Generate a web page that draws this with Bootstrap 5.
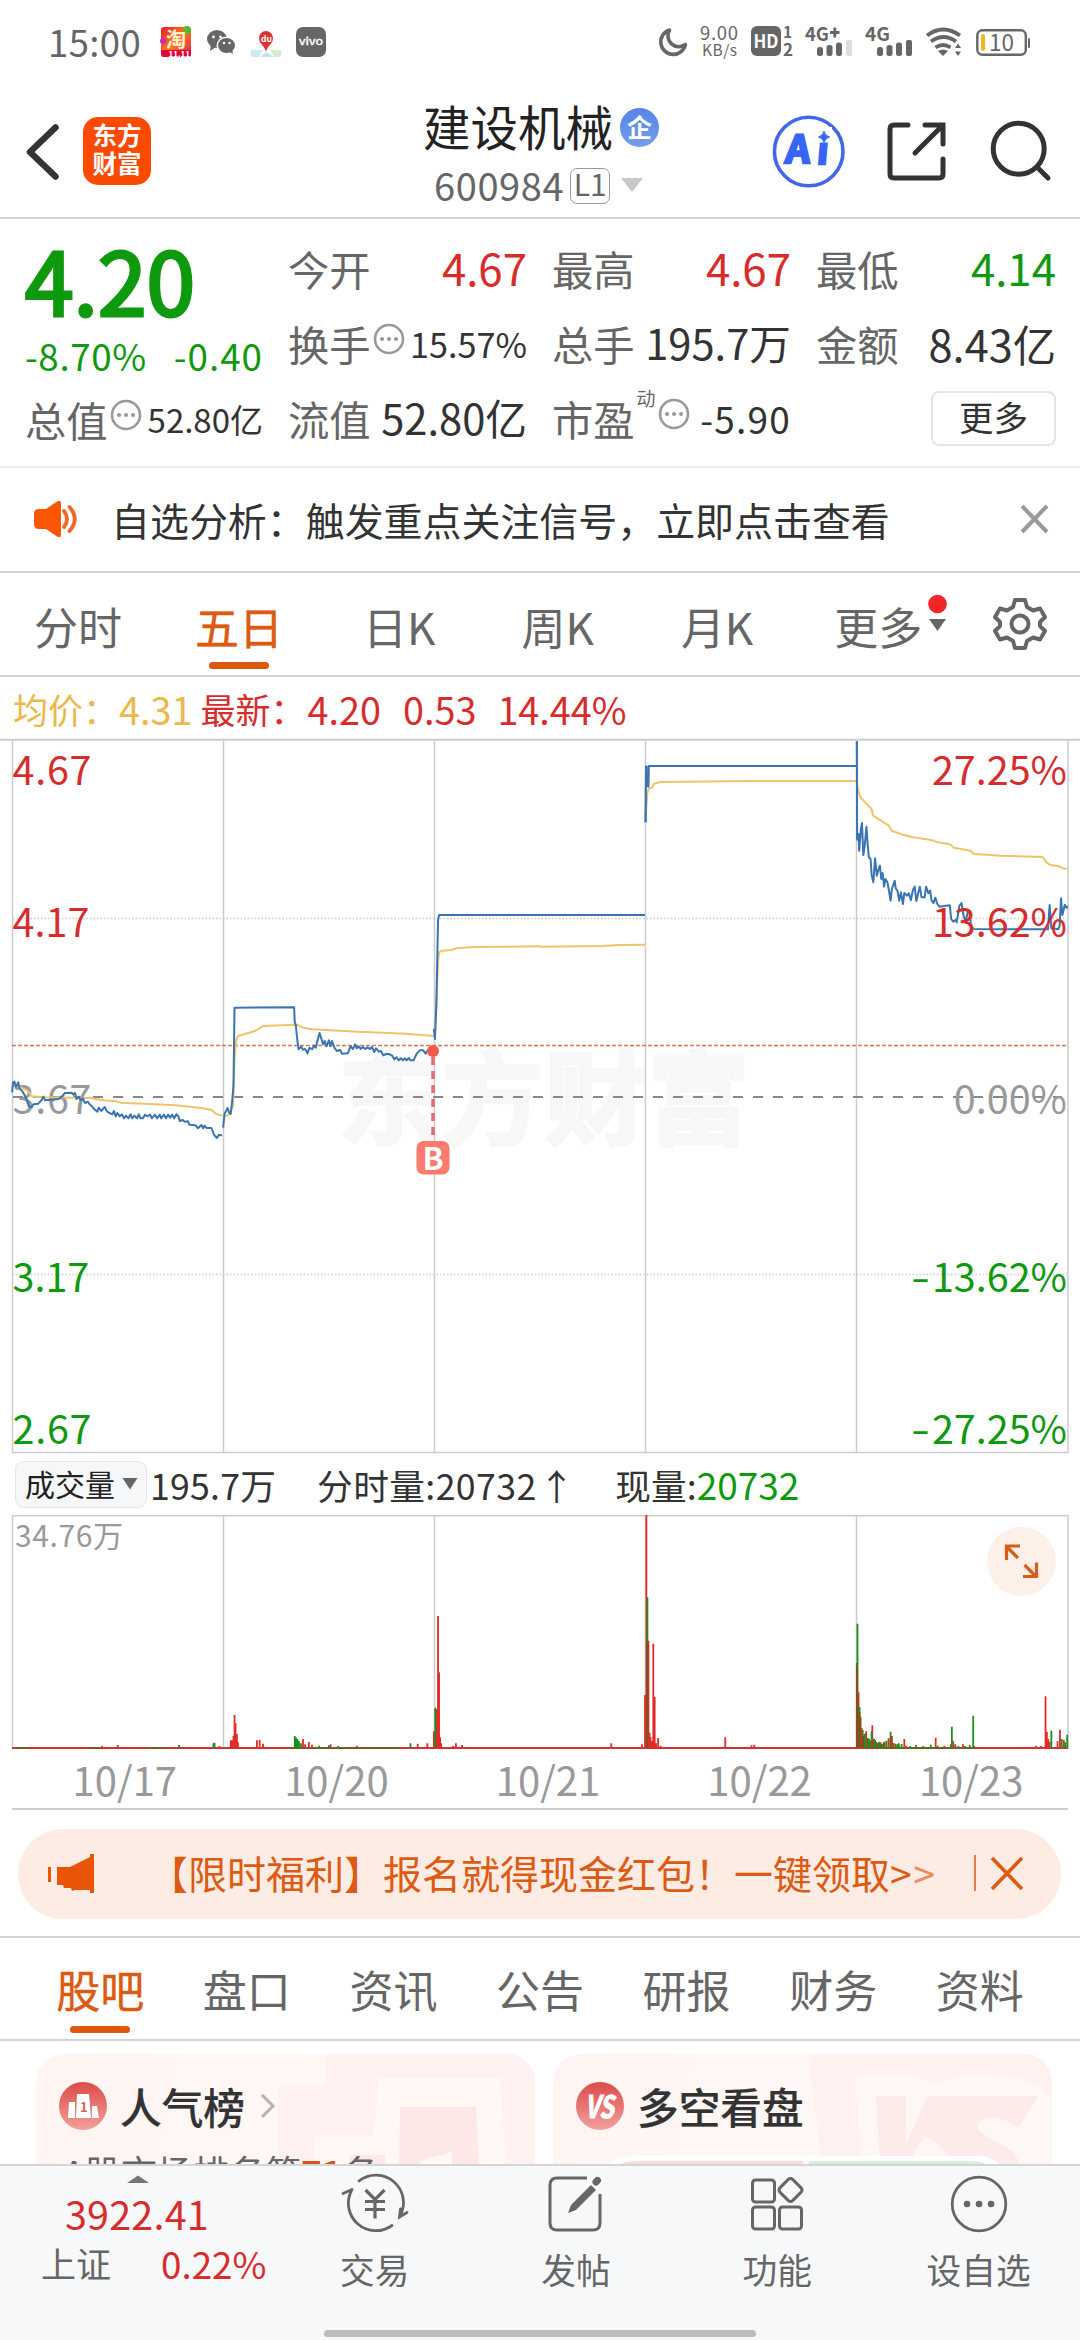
<!DOCTYPE html>
<html lang="zh-CN">
<head>
<meta charset="utf-8">
<meta name="viewport" content="width=device-width, initial-scale=1">
<title>建设机械 600984</title>
<link href="https://cdn.jsdelivr.net/npm/bootstrap@5.3.0/dist/css/bootstrap.min.css" rel="stylesheet">
<style>
:root{--up:#d82c2c;--down:#0f990f;--brand:#dc5a12;--ink:#333;--muted:#666;--line:#d4d4d4}
html,body{width:1080px;height:2340px;overflow:hidden}
body{font-family:"Noto Sans CJK SC",sans-serif;color:var(--ink);background:#fff;line-height:1;font-size:36px}
svg{display:block;flex:none;overflow:visible}
svg text{font-family:"Noto Sans CJK SC",sans-serif}
.up{color:var(--up)}.down{color:var(--down)}.brand{color:var(--brand)}.gray{color:var(--muted)}
.status{height:84px;padding:0 48px 0 48px;color:#666}
.status .clock{font-size:36.5px;line-height:52px;letter-spacing:.4px;margin-right:19px}
.topbar{height:135px;border-bottom:2px solid var(--line)}
.logo{width:68px;height:68px;border-radius:15px;background:#fc4a02;color:#fff;font-weight:700;font-size:24.5px;line-height:28px;padding-top:4px}
.stock-name{font-size:47.5px;line-height:50px;color:#222}
.ent{width:39px;height:39px;border-radius:50%;background:linear-gradient(#5585e8,#739ee9);color:#fff;font-size:25px;line-height:36px;font-weight:700}
.code{font-size:38px;letter-spacing:.6px;line-height:40px}
.lv{width:40px;height:36px;border:1.5px solid #999;border-radius:7px;font-size:30px;line-height:29px}
.quote{height:249px;border-bottom:2px solid #ececec;padding:0 24px 0 25px;display:grid;grid-template-columns:238px 239px 239px 240px;column-gap:25px}
.qcol>div{height:75px}
.qcol{padding-top:12px}
.lbl{font-size:41.3px;color:var(--muted)}
.v44{font-size:43.8px}.v41{font-size:41.7px}.v34{font-size:34.2px}
.price{font-size:87.5px;-webkit-text-stroke:3.2px var(--down);line-height:90px}
.more-btn{width:125px;height:55px;border:2px solid #e4e4e4;border-radius:8px;font-size:34.5px;line-height:42px;padding:0 0 4px;color:#333;background:#fff}
.notice{height:105px;border-bottom:2px solid var(--line);padding:0 31px 0 34px;font-size:38.95px}
.period{height:104px;border-bottom:2px solid var(--line);font-size:44px;color:var(--muted);padding:4px 0 0 34px}
.on{position:relative;color:var(--brand);-webkit-text-stroke:.4px var(--brand)}
.on::after{content:"";position:absolute;left:50%;width:60px;height:7px;border-radius:4px;margin-left:-30px;background:#e0560c;bottom:-12px}
.period .on::after{bottom:-21px}
.legend{height:63px;padding:1px 0 0 13px;font-size:37.8px}
.volhead{height:62px;padding:0 0 0 15px;font-size:35.7px}
.chip{width:132px;height:47px;background:#f6f7f9;border:1.5px solid #e4e6ea;border-radius:9px;font-size:30px;padding:0 8px 3px 9px;color:#222}
.dates{height:60px;margin:0 12px;padding-left:7px;border-bottom:2px solid #ccc;font-size:40px;color:#999}
.dates span{flex:0 0 211.6px}
.promo{height:90px;margin:19px 19px 17px 18px;border-radius:45px;background:#fdece3;color:var(--brand);padding:0 38px 4px 30px;font-size:39px}
.sections{height:105px;border-top:2px solid var(--line);border-bottom:2px solid var(--line);font-size:44px;color:var(--muted);padding:0 27px 0 27px}
.feed{height:123px;padding:13px 28px 0 36px;overflow:hidden;gap:18px}
.tile{width:499px;height:220px;border-radius:28px;position:relative;overflow:hidden;background:linear-gradient(100deg,#fef5f3 0,#fff8f5 60%,#fef4f1 100%)}
.tile .art{position:absolute;right:0;top:0}
.tile .head{position:relative;padding:28px 0 0 23px;font-size:41.7px;font-weight:500;-webkit-text-stroke:.2px #333;line-height:48px}
.tile .rank{position:relative;padding-left:27px;font-size:36px;line-height:36px;margin-top:23px;color:var(--muted)}
.dock{height:176px;background:#f7f8fa;border-top:2px solid #d3d5d8;color:var(--muted);font-size:34.7px;position:relative}
.dock .item{width:201.3px;padding-top:8px}
.dock .item span{margin-top:16px}
.home{position:absolute;left:324px;bottom:3px;width:432px;height:7px;border-radius:4px;background:#bcbdbf}
.nss *{vector-effect:non-scaling-stroke}
</style>
<script src="https://cdn.jsdelivr.net/npm/bootstrap@5.3.0/dist/js/bootstrap.bundle.min.js"></script>
</head>
<body class="d-flex flex-column m-0">

<div class="status d-flex align-items-center">
  <span class="clock">15:00</span>
  <svg width="168" height="32" viewBox="161 26 168 32">
    <defs><linearGradient id="tb" x1="0" y1="0" x2="1" y2="1"><stop offset="0" stop-color="#e31a2d"/><stop offset=".5" stop-color="#ff7a1c"/><stop offset="1" stop-color="#d8175c"/></linearGradient></defs>
    <rect x="162" y="27" width="30" height="30" rx="3" fill="url(#tb)"/><circle cx="188" cy="30" r="4" fill="#5cb52c"/><circle cx="164" cy="41" r="3" fill="#c22bb5"/>
    <path d="M162 50H192V54a3 3 0 0 1-3 3H165a3 3 0 0 1-3-3Z" fill="#e4043c"/>
    <text x="167" y="47" font-size="20" font-weight="700" fill="#fff3cf">淘</text>
    <text x="169.500" y="56.500" font-size="8" font-weight="700" fill="#fff">11.11</text>
    <g fill="#666"><ellipse cx="218" cy="39" rx="10" ry="9"/><path d="M212 45l-1 6 6-4z"/></g>
    <ellipse cx="227.500" cy="45.500" rx="10" ry="9" fill="#fff"/>
    <g fill="#666"><ellipse cx="227.500" cy="45.500" rx="8.500" ry="7.500"/><path d="M229 51l5 3-1-5z"/></g>
    <g fill="#fff"><circle cx="214.500" cy="37" r="1.400"/><circle cx="221.500" cy="37" r="1.400"/><circle cx="225" cy="43" r="1.200"/><circle cx="230.500" cy="43" r="1.200"/></g>
    <path d="M252 50h12l-4 7h-6q-2 0-2-2z" fill="#cfe8f5"/><path d="M271 50h11v5q0 2-2 2h-4z" fill="#d3efc9"/><path d="M267 52l8 5h-14z" fill="#bfe0f6"/>
    <path d="M267 52c-1-6-7-8-7-14a7 7 0 0 1 14 0c0 6-6 8-7 14z" fill="#dd3336"/>
    <text x="262" y="42" font-size="8.500" font-weight="700" fill="#fff">du</text>
    <rect x="297" y="27" width="30" height="30" rx="7" fill="#666"/>
    <text x="300" y="45" font-size="10" fill="#fff" stroke="#fff" stroke-width=".4" textLength="24" lengthAdjust="spacingAndGlyphs">vivo</text>
  </svg>
  <svg class="ms-auto" width="374" height="36" viewBox="660 25 374 36" fill="#666">
    <path d="M671.500 31a12.500 12.500 0 1 0 16 14.500 11 11 0 0 1-16-14.500z" fill="none" stroke="#666" stroke-width="3.600" stroke-linejoin="round"/>
    <text x="702" y="41" font-size="18.500" textLength="38">9.00</text><text x="704" y="57" font-size="15.500" textLength="35">KB/s</text>
    <rect x="753" y="27" width="30" height="30" rx="6"/><text x="755.500" y="49" font-size="18.500" font-weight="700" fill="#fff" textLength="25" lengthAdjust="spacingAndGlyphs">HD</text>
    <text x="785" y="39" font-size="15.500" font-weight="700">1</text><text x="785" y="57" font-size="17" font-weight="700">2</text>
    <text x="807" y="41.500" font-size="19" font-weight="700" textLength="24" lengthAdjust="spacingAndGlyphs">4G</text><path d="M832 33.500h9.500M836.800 28.500v10" stroke="#666" stroke-width="2.800"/>
    <rect x="819" y="48" width="6" height="9" rx="2.500"/><rect x="828.500" y="46" width="6" height="11" rx="2.500"/><rect x="838" y="43.500" width="6" height="13.500" rx="2.500"/><rect x="848" y="41" width="6" height="16" rx="2" fill="#ddd"/>
    <text x="867" y="41.500" font-size="19" font-weight="700" textLength="25" lengthAdjust="spacingAndGlyphs">4G</text>
    <rect x="879" y="48" width="6" height="9" rx="2.500"/><rect x="888.500" y="46" width="6" height="11" rx="2.500"/><rect x="898" y="43.500" width="6" height="13.500" rx="2.500"/><rect x="908" y="41" width="6" height="16" rx="2"/>
    <g fill="none" stroke="#666" stroke-width="3.800"><path d="M929 36.500q16-12 33 0M933 42.500q12.500-9 25 0M937.500 48.500q7.500-5 15 0"/></g><path d="M940 52q5-3 10 0l-5 5z"/><path d="M960 44.500l3 4.500h-6zM960 57l3-4.500h-6z"/>
    <rect x="979.300" y="31.300" width="48.500" height="24.500" rx="5" fill="none" stroke="#666" stroke-width="2.400"/><rect x="983" y="35" width="4" height="17" rx="2" fill="#edb823"/><rect x="1030" y="39" width="2" height="10" rx="1"/>
    <text x="991" y="52" font-size="22.500">10</text>
  </svg>
</div>

<header class="topbar d-flex align-items-start">
  <svg width="83" height="120" viewBox="0 84 83 120"><path d="M55.500 127.500 30 152l25.500 24.500" fill="none" stroke="#333" stroke-width="6.500" stroke-linecap="round" stroke-linejoin="round"/></svg>
  <div class="logo text-center" style="margin-top:33px">东方<br>财富</div>
  <div class="flex-grow-1 d-flex flex-column" style="padding:17px 0 0 272px">
    <div class="d-flex align-items-center"><span class="stock-name">建设机械</span><span class="ent text-center" style="margin:3px 0 0 7px">企</span></div>
    <div class="d-flex align-items-center gray" style="padding:14px 0 0 11px"><span class="code">600984</span><span class="lv text-center" style="margin:2px 0 0 6px">L1</span><svg style="margin-left:10px" width="24" height="16" viewBox="0 0 24 16"><path d="M1 1h22L12 15z" fill="#c8c8c8"/></svg></div>
  </div>
  <svg width="320" height="120" viewBox="760 84 320 120" fill="none" stroke="#333" stroke-width="5" stroke-linecap="round">
    <circle cx="808.700" cy="151.500" r="34.300" stroke="#4169e6" stroke-width="3.600"/>
    <g fill="#3566f6" stroke="#3566f6" stroke-width="2.500"><text x="785" y="163.500" font-size="38" font-weight="700" transform="skewX(-5) translate(14 0)">A</text><text x="816.500" y="164" font-size="37" font-weight="700" transform="skewX(-5) translate(14 0)">i</text></g>
    <rect x="815" y="127" width="17" height="15.500" fill="#fff" stroke="none"/>
    <path d="M824 131.500q1 4.500 5.500 5.500-4.500 1-5.500 5.500-1-4.500-5.500-5.500 4.500-1 5.500-5.500z" fill="#3566f6" stroke="#3566f6" stroke-width="1"/>
    <path d="M908 125h-14q-4 0-4 4v45q0 4 4 4h45q4 0 4-4v-15M925 125h18v19M942 126l-27 27" stroke-linejoin="miter"/>
    <circle cx="1018.700" cy="148.700" r="25.500"/><path d="M1037.500 167.500l10.500 10.500"/>
  </svg>
</header>

<section class="quote">
  <div class="qcol" style="padding-top:14px">
    <div class="price down" style="height:94px">4.20</div>
    <div class="d-flex align-items-center justify-content-between down" style="height:44px;font-size:36.800px;padding-top:14px"><span style="letter-spacing:.6px">-8.70%</span><span style="letter-spacing:1px">-0.40</span></div>
    <div class="d-flex align-items-center" style="margin-top:11px"><span class="lbl">总值</span><svg width="32" height="32" style="margin:-9px 0 0 2px"><circle cx="16" cy="16" r="14" fill="none" stroke="#999" stroke-width="2.600"/><path d="M9 16h.1M16 16h.1M23 16h.1" stroke="#999" stroke-width="4" stroke-linecap="round"/></svg><span class="ms-auto" style="font-size:33px">52.80亿</span></div>
  </div>
  <div class="qcol">
    <div class="d-flex align-items-center justify-content-between"><span class="lbl">今开</span><span class="v44 up">4.67</span></div>
    <div class="d-flex align-items-center"><span class="lbl">换手</span><svg width="32" height="32" style="margin:-9px 0 0 2px"><circle cx="16" cy="16" r="14" fill="none" stroke="#999" stroke-width="2.600"/><path d="M9 16h.1M16 16h.1M23 16h.1" stroke="#999" stroke-width="4" stroke-linecap="round"/></svg><span class="ms-auto v34">15.57%</span></div>
    <div class="d-flex align-items-center justify-content-between"><span class="lbl">流值</span><span class="v41">52.80亿</span></div>
  </div>
  <div class="qcol">
    <div class="d-flex align-items-center justify-content-between"><span class="lbl">最高</span><span class="v44 up">4.67</span></div>
    <div class="d-flex align-items-center justify-content-between"><span class="lbl">总手</span><span class="v41">195.7万</span></div>
    <div class="d-flex align-items-center"><span class="lbl">市盈</span><sup style="font-size:19px;top:-20px;margin-left:2px" class="gray">动</sup><svg width="32" height="32" style="margin:-9px 0 0 2px"><circle cx="16" cy="16" r="14" fill="none" stroke="#999" stroke-width="2.600"/><path d="M9 16h.1M16 16h.1M23 16h.1" stroke="#999" stroke-width="4" stroke-linecap="round"/></svg><span class="ms-auto" style="font-size:37px;letter-spacing:1.200px">-5.90</span></div>
  </div>
  <div class="qcol">
    <div class="d-flex align-items-center justify-content-between"><span class="lbl">最低</span><span class="v44 down">4.14</span></div>
    <div class="d-flex align-items-center justify-content-between"><span class="lbl">金额</span><span style="font-size:43.300px">8.43亿</span></div>
    <div class="d-flex align-items-center justify-content-end"><button class="more-btn btn">更多</button></div>
  </div>
</section>

<div class="notice d-flex align-items-center">
  <svg width="46" height="38" viewBox="34 501 46 38"><path d="M39 510h7l11-7.500q4-2 4 2v31q0 4-4 2l-11-7.500h-7q-5 0-5-5v-10q0-5 5-5z" fill="#fb5604"/><path d="M64 512q6 8 0 16M69.500 508q10.500 12 0 24" fill="none" stroke="#f0692a" stroke-width="3.800" stroke-linecap="round"/></svg>
  <span style="margin-left:31px">自选分析：触发重点关注信号，立即点击查看</span>
  <svg class="ms-auto" width="29" height="30"><path d="M2 2l25 26M27 2L2 28" stroke="#999" stroke-width="4"/></svg>
</div>

<nav class="period d-flex align-items-center">
  <span>分时</span><span class="on" style="margin-left:73px">五日</span><span style="margin-left:80px">日K</span><span style="margin-left:86px">周K</span><span style="margin-left:87px">月K</span><span style="margin-left:81px">更多</span>
  <svg width="22" height="42" style="margin:-22px 0 0 5px"><circle cx="10.500" cy="10" r="9.300" fill="#f12626"/><path d="M2 25h17l-8.500 12z" fill="#666"/></svg>
  <svg width="54" height="54" viewBox="0 0 54 54" style="margin:-4px 0 0 44px" fill="none" stroke="#666" stroke-width="4" stroke-linejoin="round"><path d="M22 3h10l2 7 6 3.500 7-2 5 8.500-5 5v4l5 5-5 8.500-7-2-6 3.500-2 7H22l-2-7-6-3.500-7 2L2 34l5-5v-4l-5-5 5-8.500 7 2 6-3.500z"/><circle cx="27" cy="27" r="8.500"/></svg>
</nav>

<div class="legend d-flex align-items-center">
  <span style="color:#ecb84c;font-size:35px">均价：</span><span style="color:#ecb84c;margin-left:1px">4.31</span><span class="up" style="font-size:35px;margin-left:8px">最新：</span><span class="up" style="margin-left:2px">4.20</span><span class="up" style="margin-left:22px">0.53</span><span class="up" style="margin-left:21px">14.44%</span>
</div>

<svg width="1080" height="714" viewBox="0 740 1080 714">
  <text x="338" y="1138" font-size="102" font-weight="700" fill="#f7f7f7" stroke="#f7f7f7" stroke-width="3" textLength="412">东方财富</text>
  <g fill="none" stroke="#ccc" stroke-width="1.500"><path d="M0 740.800H1080" stroke-width="2"/><path d="M12.500 741V1453.500H1068V741M223.500 742V1453M434.500 742V1453M645.500 742V1453M856.500 742V1453"/><path d="M13 919.500H1068M13 1275.500H1068" stroke-dasharray="1.500 2"/></g>
  <path d="M13 1098H1062" stroke="#888" stroke-width="2" stroke-dasharray="10 10"/>
  <path d="M12 1046.500H1067" stroke="#d37b52" stroke-width="1.500" stroke-dasharray="4 2"/>
  <g font-size="39.500" fill="#999"><text x="12.500" y="1115" textLength="79">3.67</text><text x="1067" y="1115" text-anchor="end">0.00%</text></g>
  <g class="nss" fill="none" stroke="#eec468" stroke-width="2" stroke-linejoin="round" transform="translate(0 740) scale(.34436 .33333)">
    <path d="M37 1040L60 1045 80 1055 92 1072 130 1075 260 1077 300 1084 338 1087 350 1091 420 1094 510 1099 590 1108 614 1113 628 1125 645 1130M654 1132L668 1124 677 1098 681 960 686 905 691 891 741 876 762 862 780 860 863 857 880 866 907 871 1040 878 1180 884 1258 891M1263 890L1268 780 1272 670 1275 640 1284 635 1310 633 1330 627 1380 624 1570 622"/>
  </g>
  <g class="nss" fill="none" stroke="#eec468" stroke-width="2" stroke-linejoin="round" transform="translate(540 740) scale(.34436 .33333)">
    <path d="M0 623L180 621 230 618 306 617M307 230L312 160 317 147 325 146 331 134 350 129 620 126 919 126 925 160 933 178 963 210 967 230 1012 259 1022 276 1054 287 1080 294 1140 304 1155 310 1190 316 1202 326 1250 335 1260 345 1340 350 1460 354 1470 370 1482 378 1505 381 1518 388 1530 390"/>
  </g>
  <g class="nss" fill="none" stroke="#3a74b2" stroke-width="2" stroke-linejoin="round" transform="translate(0 740) scale(.34436 .33333)">
    <path d="M35 1060L38 1030 42 1028 46 1044 53 1030 57 1050 64 1055 70 1066 76 1078 84 1102 92 1105 97 1096 111 1094 121 1083 126 1073 131 1084 170 1080 183 1070 188 1062 208 1061 213 1067 218 1062 222 1080 229 1073 234 1084 240 1078 247 1092 255 1088 260 1096 267 1102 275 1112 283 1118 287 1106 294 1116 304 1104 311 1118 326 1126 331 1116 336 1132 341 1122 348 1132 354 1126 360 1138 366 1130 373 1138 379 1126 384 1138 390 1130 398 1138 403 1126 408 1138 415 1138 421 1127 427 1132 436 1127 441 1138 450 1127 456 1138 464 1127 468 1138 476 1127 482 1138 488 1127 494 1136 500 1127 506 1138 512 1126 518 1132 522 1146 531 1143 536 1148 546 1147 550 1157 563 1158 569 1160 575 1168 585 1158 590 1168 594 1160 600 1167 614 1167 622 1188 630 1197 635 1188 645 1189M648 1166L652 1125 661 1107 666 1122 670 1125 674 1088 678 1040 679 960 681 806 854 805 856 850 859 858 863 900 867 930 875 923 880 932 886 930 893 943 898 927 907 930 912 920 917 926 923 900 928 882 933 898 938 916 943 906 948 922 955 904 959 922 964 906 972 928 979 936 988 933 993 944 1010 943 1018 922 1025 930 1031 916 1036 928 1042 922 1047 930 1054 924 1061 930 1067 925 1074 930 1080 924 1087 939 1092 928 1100 938 1106 936 1113 949 1121 945 1129 945 1139 950 1145 961 1151 955 1158 964 1164 958 1170 964 1176 958 1181 964 1187 957 1192 964 1201 964 1210 944 1219 934 1229 934 1236 944 1242 934 1250 942 1256 935M1260 870L1263 900 1267 800 1270 650 1272 545 1275 528 1570 528"/>
  </g>
  <g class="nss" fill="none" stroke="#3a74b2" stroke-width="2" stroke-linejoin="round" transform="translate(540 740) scale(.34436 .33333)">
    <path d="M0 528H305M306 250L308 82 311 140 315 142 316 81 920 81M920 6L921 300 925 285 927 335 932 270 935 252 939 348 943 320 948 263 951 310 955 355 960 360 963 408 968 430 973 358 978 410 982 395 987 380 991 420 995 402 999 443 1003 420 1009 430 1013 453 1018 485 1022 450 1030 425 1033 448 1038 455 1043 485 1048 460 1054 495 1058 462 1066 470 1071 463 1077 484 1083 453 1088 443 1093 486 1098 464 1103 443 1108 475 1117 475 1121 443 1128 463 1133 455 1137 485 1143 492 1148 476 1154 495 1160 503 1178 500 1190 499 1194 540 1200 548 1207 543 1210 550 1218 500 1224 492 1230 530 1236 548 1242 520 1248 518 1251 555 1258 570 1475 571 1480 498 1485 568 1505 571 1509 560 1513 478 1517 528 1524 497 1529 506 1533 503" /><path d="M308 81V250M311 81V145M921 6V305M926 290V335" stroke-width="1.300"/>
  </g>
  <g font-size="39.500"><g fill="#d82c2c"><text x="12.500" y="785.500" textLength="79">4.67</text><text x="12.500" y="937.500" textLength="77">4.17</text><text x="1067" y="785.500" text-anchor="end">27.25%</text><text x="1067" y="937.500" text-anchor="end">13.62%</text></g>
  <g fill="#0f990f"><text x="12.500" y="1292.500">3.17</text><text x="12.500" y="1444.500" textLength="79">2.67</text><text x="1067" y="1292.500" text-anchor="end">13.62%</text><text x="1067" y="1444.500" text-anchor="end">27.25%</text><text x="911" y="1292.500" textLength="19" lengthAdjust="spacingAndGlyphs">-</text><text x="911" y="1444.500" textLength="19" lengthAdjust="spacingAndGlyphs">-</text></g></g>
  <path d="M433 1058V1141" stroke="#e86a6a" stroke-width="3.500" stroke-dasharray="8 6"/><circle cx="433" cy="1052" r="6" fill="#f25a4e"/>
  <rect x="416.500" y="1142" width="33" height="33.500" rx="7" fill="#fb7c6e"/><text x="433" y="1170.500" font-size="31" font-weight="700" fill="#fff" text-anchor="middle">B</text>
</svg>

<div class="volhead d-flex align-items-center">
  <span class="chip d-flex align-items-center justify-content-between">成交量<svg width="16" height="12" style="margin-top:3px"><path d="M.5 0h15L8 11.500z" fill="#666"/></svg></span>
  <span style="margin-left:3px;letter-spacing:.2px">195.7万</span><span style="margin-left:41px;letter-spacing:.4px">分时量:20732</span><span style="margin-left:2px">↑</span><span style="margin-left:41px">现量:</span><span class="down" style="font-size:37px">20732</span>
</div>

<svg width="1080" height="235" viewBox="0 1516 1080 235">
  <path d="M12.500 1750V1516.800H1068V1750M223.500 1517V1749M434.500 1517V1749M645.500 1517V1749M856.500 1517V1749" fill="none" stroke="#ccc" stroke-width="1.500"/>
  <path d="M12 1749H1068" stroke="#cf3530" stroke-width="2"/>
  <path d="M18 1749H27M90 1749H100M150 1749H165M290 1749H400M880 1749H975" stroke="#5c6a1c" stroke-width="1.500"/>
  <g class="nss" fill="none" stroke="#e22a2a" stroke-width="1.800" transform="translate(0 1430) scale(.34436 .33333)">
    <path d="M296 957V951M342 957V948M637 957V951M670 957V934M673 957V934M678 957V920M681 957V858M684 957V883M688 957V915M691 957V940M746 957V934M754 957V932M764 957V944M880 957V930M886 957V946M897 957V939M906 957V947M960 957V946M1036 957V950M1213 957V944M1241 957V943M1260 957V907M1267 957V840M1272 957V561M1275 957V730M1278 957V925M1281 957V943M1316 957V950M1324 957V943M1342 957V948"/>
    <path d="M520 957V948M620 957V943M623 957V941M856 957V921M860 957V926M864 957V931M868 957V936M874 957V943M927 957V950M955 957V949M982 957V951M1192 957V943M1264 957V836" stroke="#1a8f1a"/>
  </g>
  <g class="nss" fill="none" stroke="#e22a2a" stroke-width="1.800" transform="translate(540 1430) scale(.34436 .33333)">
    <path d="M207 957V943M296 957V946M305 957V798M309 957V258M315 957V635M318 957V911M321 957V924M325 957V936M329 957V644M333 957V804M337 957V943M343 957V927M350 957V950M538 957V925M614 957V949M622 957V947M920 957V702M925 957V790M931 957V863M934 957V897M940 957V925M947 957V907M960 957V935M965 957V889M970 957V929M977 957V939M989 957V940M1001 957V938M1012 957V928M1022 957V921M1032 957V944M1058 957V930M1064 957V950M1149 957V926M1174 957V950M1200 957V936M1206 957V946M1228 957V946M1261 957V951M1441 957V950M1455 957V951M1468 957V802M1472 957V908M1476 957V930M1480 957V938M1503 957V936M1510 957V902M1521 957V933"/>
    <path d="M312 957V505M922 957V584M928 957V835M937 957V903M943 957V914M952 957V927M956 957V930M963 957V907M973 957V933M981 957V942M985 957V938M994 957V945M998 957V940M1006 957V935M1018 957V908M1027 957V942M1037 957V946M1042 957V943M1050 957V945M1075 957V951M1092 957V948M1113 957V951M1135 957V947M1155 957V950M1193 957V946M1196 957V893M1215 957V950M1234 957V951M1248 957V948M1258 957V860M1485 957V905M1515 957V930M1525 957V940M1531 957V917" stroke="#1a8f1a"/>
    <path d="M311 957V640M921 957V720M928 957V850M938 957V920M990 957V944M1018 957V930" stroke="#8a4a1c"/>
  </g>
  <text x="15" y="1548" font-size="30" fill="#999" textLength="108">34.76万</text>
  <circle cx="1021.400" cy="1562.300" r="34.500" fill="#fdf0e9"/>
  <path d="M1018 1559l-12-12M1006.500 1561v-14h13.500M1024.500 1566l12 12M1023 1577.500h13.500v-14" fill="none" stroke="#d95c18" stroke-width="3.200"/>
</svg>

<div class="dates d-flex align-items-center text-center"><span>10/17</span><span>10/20</span><span>10/21</span><span>10/22</span><span>10/23</span></div>

<div class="promo d-flex align-items-center">
  <svg width="46" height="40" viewBox="48 1852 46 40"><path d="M48 1867h3v15h-3zM57 1867h13l20-10v-3h4v39h-4v-3h-15l-3 1-1-3h-7l-1-3h-6z" fill="#e95506"/></svg>
  <span style="margin-left:55px">【限时福利】报名就得现金红包！一键领取<span style="letter-spacing:1.500px">&gt;<span style="opacity:.65">&gt;</span></span></span>
  <svg class="ms-auto" width="49" height="38" viewBox="0 -1 49 38" fill="none" stroke="#dc5a12"><path d="M1 1v36" stroke-width="1.500"/><path d="M18 4l30 31M48 4L18 35" stroke-width="3.600"/></svg>
</div>

<nav class="sections d-flex align-items-center text-center"><span class="flex-fill"><span class="on">股吧</span></span><span class="flex-fill">盘口</span><span class="flex-fill">资讯</span><span class="flex-fill">公告</span><span class="flex-fill">研报</span><span class="flex-fill">财务</span><span class="flex-fill">资料</span></nav>

<section class="feed d-flex">
  <div class="tile">
    <svg class="art" width="256" height="112" viewBox="279 0 256 112"><path d="M279 31h47V0h209v112H279z" fill="#fef1ef"/><path d="M314 112V82h59l6-58h121l6 88z" fill="#fff8f5"/><path d="M350 112v-11h35v11zM400 53h76l3 59h-80z" fill="#fde8e6"/><path d="M420 112v-5l32-9v14z" fill="#fff8f5"/></svg>
    <div class="head d-flex align-items-center"><svg width="48" height="48"><defs><linearGradient id="rd" x1="0" y1="0" x2="0" y2="1"><stop stop-color="#dc4b48"/><stop offset="1" stop-color="#f3a09c"/></linearGradient></defs><circle cx="24" cy="24" r="24" fill="url(#rd)"/><path d="M10 20h6v16H9zM18 12h12l2 24H17zM33 24h5l2 12h-7z" fill="#fff"/><text x="21" y="30" font-size="13" font-weight="700" fill="#d9605c">1</text></svg><span style="margin:0 0 0 13px">人气榜</span><svg width="16" height="26" style="margin-left:15px" fill="none" stroke="#b5b2b1" stroke-width="3"><path d="M2 2l11 11L2 24"/></svg></div>
    <div class="rank">A股市场排名第<b style="color:#d8501c;font-size:35px">71</b>名</div>
  </div>
  <div class="tile">
    <svg class="art" width="246" height="112" viewBox="806 0 246 112"><path d="M808 0h244v112H822z" fill="#fef1ef"/><path d="M855 21h62l17 10 26-10h40q35 4 52 22v69H862z" fill="#fff7f5"/><path d="M876 42h30v48l22-48h110l-20 32q-20-15-34-9-14 8 4 18l25 15q8 8 4 16H880z" fill="#fdebe9"/><path d="M906 112l18-30 15 8 15 22z" fill="#fff7f5"/></svg>
    <div class="head d-flex align-items-center"><svg width="48" height="48"><circle cx="24" cy="24" r="24" fill="url(#rd)"/><text x="9" y="36" font-size="31" font-weight="700" font-style="italic" fill="#fff" stroke="#fff" textLength="29" lengthAdjust="spacingAndGlyphs">VS</text></svg><span style="margin:0 0 0 13px">多空看盘</span></div>
    <svg class="position-relative" width="499" height="20" style="margin-top:24px"><rect x="46" y="2" width="410" height="60" rx="30" fill="#fff"/><path d="M250 7H84q-20 0-30 13h196z" fill="#fadcd8"/><path d="M256 7h160q20 0 32 13H256z" fill="#d9eddb"/></svg>
  </div>
</section>

<nav class="dock d-flex">
  <div style="width:274px" class="position-relative">
    <svg width="24" height="8" style="margin:9px 0 0 126px"><path d="M1 8L12 .5 23 8z" fill="#777"/></svg>
    <div class="up" style="font-size:39.500px;line-height:46px;padding:7px 0 0 65px;letter-spacing:.2px">3922.41</div>
    <div class="d-flex align-items-center" style="line-height:46px;padding-left:41px;margin-top:4px;font-size:35px"><span>上证</span><span class="up" style="margin-left:50px;font-size:36.800px">0.22%</span></div>
  </div>
  <div class="item d-flex flex-column align-items-center"><svg width="70" height="62" viewBox="0 0 70 62" fill="none" stroke="#666" stroke-width="2.800" stroke-linecap="round"><path d="M19 7A27.500 27.500 0 0 1 60 42M52 51.500A27.500 27.500 0 0 1 11.500 16.500M3 19.500l9-4M67 38.500l-7.500 4.500 1-8"/><path d="M25.500 16l9.500 9.500 9.500-9.500M35 25.500v19M25 27.500h20M25 35.500h20" stroke-width="3.200" stroke-linecap="butt"/></svg><span>交易</span></div>
  <div class="item d-flex flex-column align-items-center"><svg width="58" height="62" viewBox="0 0 58 62" fill="none" stroke="#666" stroke-width="3"><path d="M40 4H10q-7 0-7 7v38q0 7 7 7h36q7 0 7-7V20"/><path d="M21 39l3-8L44 11l5 5-20 20z" fill="#666" stroke="none"/><path d="M49 8l1.500-1.500" stroke-width="7" stroke-linecap="round"/></svg><span>发帖</span></div>
  <div class="item d-flex flex-column align-items-center"><svg width="56" height="62" viewBox="0 0 56 62" fill="none" stroke="#666" stroke-width="3"><rect x="3.500" y="6" width="22" height="22" rx="3"/><rect x="3.500" y="33" width="22" height="22" rx="3"/><rect x="30.500" y="33" width="22" height="22" rx="3"/><rect x="32.500" y="7" width="18" height="18" rx="3" transform="rotate(45 41.500 16)"/></svg><span>功能</span></div>
  <div class="item d-flex flex-column align-items-center"><svg width="58" height="62" viewBox="0 0 58 62" fill="none" stroke="#666" stroke-width="2.800"><circle cx="29" cy="30" r="26.800"/><path d="M17 30h.1M29 30h.1M41 30h.1" stroke-width="6.500" stroke-linecap="round"/></svg><span>设自选</span></div>
  <div class="home"></div>
</nav>
</body>
</html>
